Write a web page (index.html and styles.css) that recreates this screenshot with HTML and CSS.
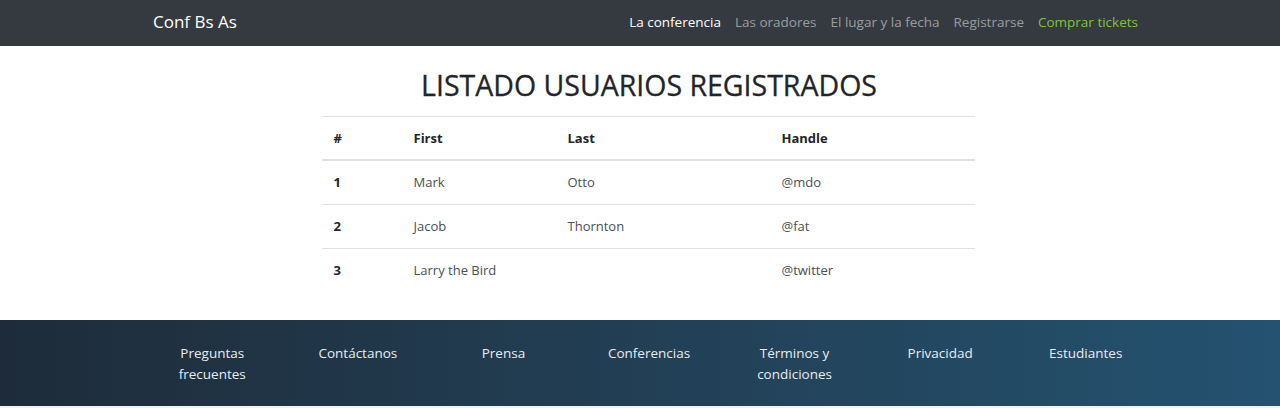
FILE: index.html
```html
<!DOCTYPE html>
<html lang="es">
<head>
<meta charset="utf-8">
<title>Conf Bs As</title>
<link rel="stylesheet" href="styles.css">
</head>
<body>
<nav class="navbar">
  <div class="container nav-inner">
    <a class="brand" href="#">Conf Bs As</a>
    <ul class="nav-links">
      <li><a class="active" href="#">La conferencia</a></li>
      <li><a href="#">Las oradores</a></li>
      <li><a href="#">El lugar y la fecha</a></li>
      <li><a href="#">Registrarse</a></li>
      <li><a class="tickets" href="#">Comprar tickets</a></li>
    </ul>
  </div>
</nav>
<main class="main">
  <h1 class="title">LISTADO USUARIOS REGISTRADOS</h1>
  <table class="users">
    <thead>
      <tr>
        <th class="c1">#</th>
        <th class="c2">First</th>
        <th class="c3">Last</th>
        <th class="c4">Handle</th>
      </tr>
    </thead>
    <tbody>
      <tr><th>1</th><td>Mark</td><td>Otto</td><td>@mdo</td></tr>
      <tr><th>2</th><td>Jacob</td><td>Thornton</td><td>@fat</td></tr>
      <tr><th>3</th><td>Larry the Bird</td><td></td><td>@twitter</td></tr>
    </tbody>
  </table>
</main>
<footer class="footer">
  <ul class="footer-links">
    <li><a href="#">Preguntas frecuentes</a></li>
    <li><a href="#">Contáctanos</a></li>
    <li><a href="#">Prensa</a></li>
    <li><a href="#">Conferencias</a></li>
    <li><a href="#">Términos y condiciones</a></li>
    <li><a href="#">Privacidad</a></li>
    <li><a href="#">Estudiantes</a></li>
  </ul>
</footer>
</body>
</html>
```
FILE: styles.css
```css
* { box-sizing: border-box; }
html, body { margin: 0; padding: 0; }
body {
  font-family: "Open Sans", "Noto Sans", sans-serif;
  font-size: 13px;
  color: #212529;
  background: #fff;
}
a { text-decoration: none; }
ul { list-style: none; margin: 0; padding: 0; }

.navbar {
  background: #343a40;
  height: 46px;
  padding-left: 18px;
}
.container {
  width: 992px;
  margin: 0 auto;
}
.nav-inner {
  display: flex;
  align-items: center;
  justify-content: space-between;
  height: 46px;
}
.brand {
  color: #fff;
  font-size: 17px;
  line-height: 22px;
  margin-top: -2px;
}
.nav-links {
  display: flex;
  margin-top: -2px;
}
.nav-links a {
  display: block;
  padding: 0 7px;
  color: rgba(255,255,255,.5);
  font-size: 13.5px;
  line-height: 20px;
}
.nav-links a.active { color: #fff; }
.nav-links a.tickets { color: #7fc241; }

.main {
  padding-left: 18px;
  height: 274px;
  display: flex;
  flex-direction: column;
  align-items: center;
}
.title {
  margin: 21px 0 13px;
  font-size: 28.5px;
  font-weight: 400;
  line-height: 36px;
  color: #212529;
  -webkit-text-stroke: 0.3px #212529;
}
.users {
  width: 653px;
  border-collapse: collapse;
  margin-left: -2px;
}
.users th, .users td {
  text-align: left;
  padding: 11px 12px;
  line-height: 21px;
  font-size: 13px;
  border-top: 1px solid #dee2e6;
}
.users th { font-weight: 700; color: #212529; }
.users td { color: #495057; }
.users thead th { border-bottom: 2px solid #dee2e6; padding-bottom: 10px; }
.c1 { width: 80px; }
.c2 { width: 154px; }
.c3 { width: 214px; }
.c4 { width: 205px; }

.footer {
  box-sizing: content-box;
  height: 63px;
  padding-top: 23px;
  padding-left: 18px;
  background: linear-gradient(90deg, #1e2c3a 0%, #223f55 50%, #245270 100%);
  border-bottom: 2px solid #f2f2f2;
}
.footer-links {
  width: 1019px;
  margin: 0 auto;
  display: grid;
  grid-template-columns: repeat(7, 1fr);
}
.footer-links li {
  padding: 0 15px;
  text-align: center;
}
.footer-links a {
  color: #e9ecef;
  font-size: 13.5px;
  line-height: 21px;
}
```
